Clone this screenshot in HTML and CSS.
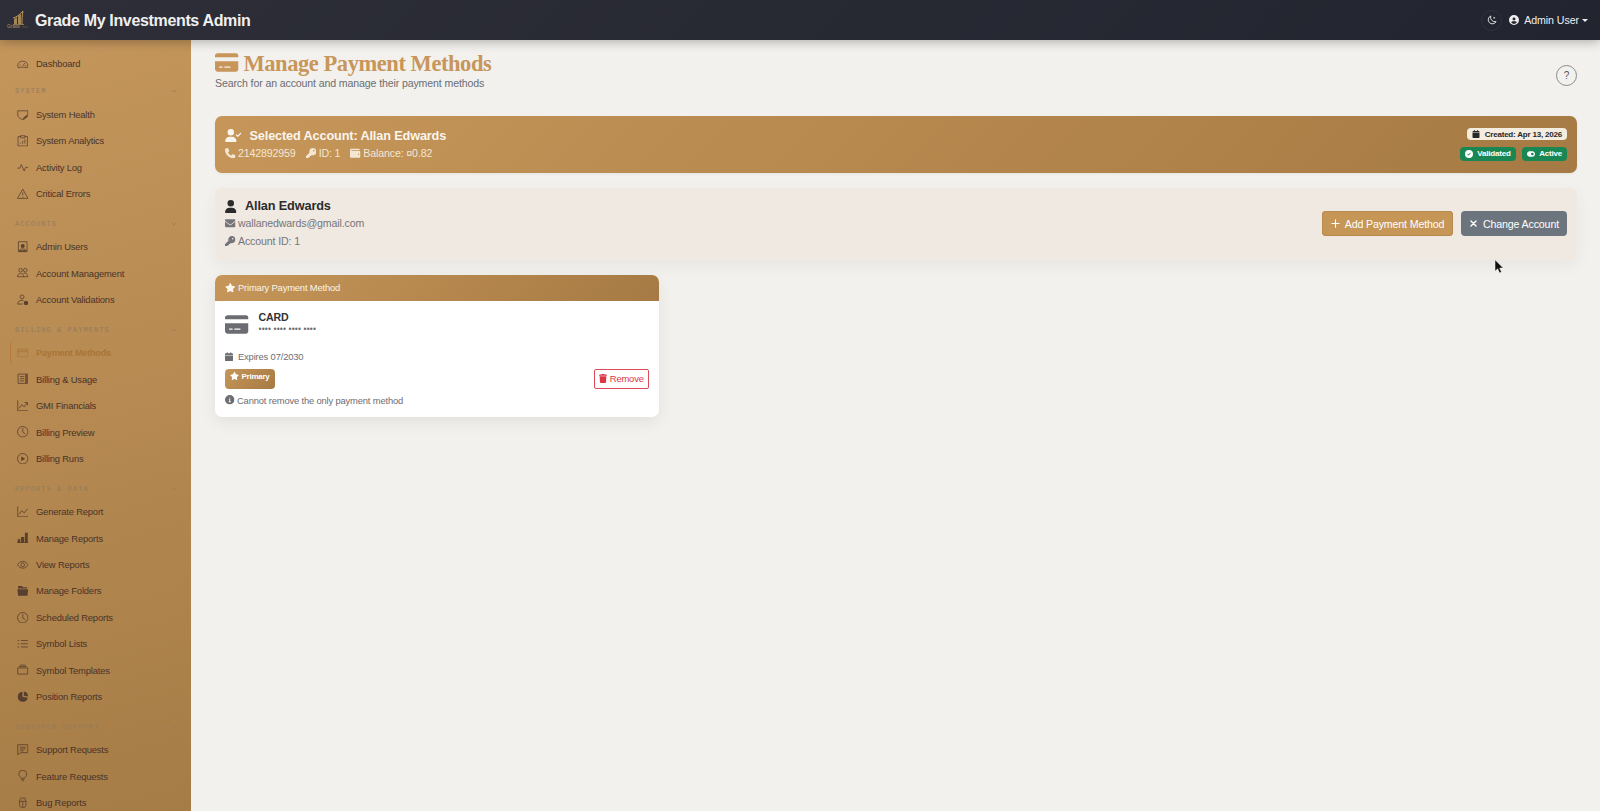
FILE: index.html
```html
<!DOCTYPE html>
<html lang="en">
<head>
  <meta charset="UTF-8">
  <meta name="viewport" content="width=device-width, initial-scale=1.0">
  <title>Manage Payment Methods - Grade My Investments Admin</title>
  <link rel="stylesheet" href="styles.css">
</head>
<body>
  <svg class="sprite" xmlns="http://www.w3.org/2000/svg">
    <!-- solid icons -->
    <symbol id="credit-card" viewBox="0 0 576 512"><path d="M64 32C28.7 32 0 60.7 0 96v32H576V96c0-35.3-28.7-64-64-64H64zM576 224H0V416c0 35.3 28.7 64 64 64H512c35.3 0 64-28.7 64-64V224zM112 352h64c8.8 0 16 7.2 16 16s-7.2 16-16 16H112c-8.8 0-16-7.2-16-16s7.2-16 16-16zm112 16c0-8.8 7.2-16 16-16H368c8.8 0 16 7.2 16 16s-7.2 16-16 16H240c-8.8 0-16-7.2-16-16z"/></symbol>
    <symbol id="user" viewBox="0 0 448 512"><path d="M224 256A128 128 0 1 0 224 0a128 128 0 1 0 0 256zm-45.7 48C79.8 304 0 383.8 0 482.3C0 498.7 13.3 512 29.7 512H418.3c16.4 0 29.7-13.3 29.7-29.7C448 383.8 368.2 304 269.7 304H178.3z"/></symbol>
    <symbol id="user-check" viewBox="0 0 640 512"><path d="M224 256A128 128 0 1 0 224 0a128 128 0 1 0 0 256zm-45.7 48C79.8 304 0 383.8 0 482.3C0 498.7 13.3 512 29.7 512H418.3c16.4 0 29.7-13.3 29.7-29.7C448 383.8 368.2 304 269.7 304H178.3z"/><path d="M440 232l56 56 120-120" fill="none" stroke="currentColor" stroke-width="46" stroke-linecap="round" stroke-linejoin="round"/></symbol>
    <symbol id="phone" viewBox="0 0 512 512"><path d="M164.9 24.6c-7.7-18.6-28-28.5-47.4-23.2l-88 24C12.1 30.2 0 46 0 64C0 311.4 200.6 512 448 512c18 0 33.8-12.1 38.6-29.5l24-88c5.3-19.4-4.6-39.7-23.2-47.4l-96-40c-16.3-6.8-35.2-2.1-46.3 11.6L304.7 368C234.3 334.7 177.3 277.7 144 207.3L193.3 167c13.7-11.2 18.4-30 11.6-46.3l-40-96z"/></symbol>
    <symbol id="key" viewBox="0 0 512 512"><path d="M336 352c97.2 0 176-78.8 176-176S433.2 0 336 0S160 78.8 160 176c0 18.7 2.9 36.8 8.3 53.7L7 391c-4.5 4.5-7 10.6-7 17v80c0 13.3 10.7 24 24 24h80c13.3 0 24-10.7 24-24V448h40c13.3 0 24-10.7 24-24V384h40c6.4 0 12.5-2.5 17-7l33.3-33.3c16.9 5.4 35 8.3 53.7 8.3zM376 96a40 40 0 1 1 0 80 40 40 0 1 1 0-80z"/></symbol>
    <symbol id="wallet" viewBox="0 0 512 512"><path fill-rule="evenodd" d="M64 32C28.7 32 0 60.7 0 96V416c0 35.3 28.7 64 64 64H448c35.3 0 64-28.7 64-64V192c0-35.3-28.7-64-64-64H80c-8.8 0-16-7.2-16-16s7.2-16 16-16H448c17.7 0 32-14.3 32-32s-14.3-32-32-32H64zM416 272a32 32 0 1 1 0 64 32 32 0 1 1 0-64z"/></symbol>
    <symbol id="envelope" viewBox="0 0 512 512"><path d="M48 64C21.5 64 0 85.5 0 112c0 15.1 7.1 29.3 19.2 38.4L236.8 313.6c11.4 8.5 27 8.5 38.4 0L492.8 150.4c12.1-9.1 19.2-23.3 19.2-38.4c0-26.5-21.5-48-48-48H48zM0 176V384c0 35.3 28.7 64 64 64H448c35.3 0 64-28.7 64-64V176L294.4 339.2c-22.8 17.1-54 17.1-76.8 0L0 176z"/></symbol>
    <symbol id="star" viewBox="0 0 576 512"><path d="M316.9 18C311.6 7 300.4 0 288.1 0s-23.4 7-28.8 18L195 150.3 51.4 171.5c-12 1.8-22 10.2-25.7 21.7s-.7 24.2 7.9 32.7L137.8 329 113.2 474.7c-2 12 3 24.2 12.9 31.3s23 8 33.8 2.3l128.3-68.5 128.3 68.5c10.8 5.7 23.9 4.9 33.8-2.3s14.9-19.3 12.9-31.3L438.5 329 542.7 225.9c8.6-8.5 11.7-21.2 7.9-32.7s-13.7-19.9-25.7-21.7L381.2 150.3 316.9 18z"/></symbol>
    <symbol id="calendar" viewBox="0 0 448 512"><path d="M96 32V64H48C21.5 64 0 85.5 0 112v48H448V112c0-26.5-21.5-48-48-48H352V32a32 32 0 0 0-64 0V64H160V32a32 32 0 0 0-64 0zM448 192H0V464c0 26.5 21.5 48 48 48H400c26.5 0 48-21.5 48-48V192z"/></symbol>
    <symbol id="check-circle" viewBox="0 0 512 512"><path fill-rule="evenodd" d="M256 512A256 256 0 1 0 256 0a256 256 0 1 0 0 512zM369 209L241 337c-9.4 9.4-24.6 9.4-33.9 0l-64-64 34-34 47 47 111-111z"/></symbol>
    <symbol id="toggle-on" viewBox="0 0 576 512"><path fill-rule="evenodd" d="M192 64C86 64 0 150 0 256S86 448 192 448H384c106 0 192-86 192-192S490 64 384 64H192zM384 160a96 96 0 1 1 0 192 96 96 0 1 1 0-192z"/></symbol>
    <symbol id="info" viewBox="0 0 512 512"><path fill-rule="evenodd" d="M256 512A256 256 0 1 0 256 0a256 256 0 1 0 0 512zM208 224h72v112h32v48H200v-48h32v-64h-24zM256 128a32 32 0 1 1 0 64 32 32 0 1 1 0-64z"/></symbol>
    <symbol id="trash" viewBox="0 0 448 512"><path d="M135 18L128 32H32a32 32 0 0 0 0 64H416a32 32 0 0 0 0-64H320L313 18C308 7 297 0 284 0H164c-12 0-23 7-29 18zM416 128H32L53 467c2 25 23 45 48 45H347c25 0 46-20 48-45z"/></symbol>
    <symbol id="user-circle" viewBox="0 0 512 512"><path fill-rule="evenodd" d="M256 0a256 256 0 1 0 0 512 256 256 0 1 0 0-512zM256 128a76 76 0 1 1 0 152 76 76 0 1 1 0-152zM112 390c20-46 52-70 100-70h88c48 0 80 24 100 70-80 90-208 90-288 0z"/></symbol>
    <symbol id="plus" viewBox="0 0 16 16"><path d="M8 1.5v13M1.5 8h13" stroke="currentColor" stroke-width="2" stroke-linecap="round"/></symbol>
    <symbol id="times" viewBox="0 0 16 16"><path d="M3.500 3.500l9 9M12.500 3.500l-9 9" stroke="currentColor" stroke-width="2.4" stroke-linecap="round"/></symbol>
    <!-- outline icons for the sidebar -->
    <symbol id="moon" viewBox="0 0 16 16"><path class="line moon" d="M6 1.5a6.6 6.6 0 1 0 8.5 9A7 7 0 0 1 6 1.5z"/><path class="line" d="M11.500 3v3M10 4.500h3"/></symbol>
    <symbol id="chevron" viewBox="0 0 16 16"><path class="line heavy" d="M2 5l6 6 6-6"/></symbol>
    <symbol id="gauge" viewBox="0 0 16 16"><path class="line" d="M1.500 13.500C0 9 2 4.500 8 4.500s8 4.500 6.500 9c-4-1-9-1-13 0zM8 11l3-4M3.500 10H5M11.500 10.500H13"/></symbol>
    <symbol id="shield" viewBox="0 0 16 16"><path class="line" d="M1 2.5h14v6C15 11 11 14 8 15 5 14 1 11 1 8.5z"/><path d="M8 13l6-5v3l-5 3z"/></symbol>
    <symbol id="clipboard" viewBox="0 0 16 16"><path class="line" d="M5 2H1.5v13.3h13V2H11M5 1h6v3H5zM5 12v-1.5M8 12V8M11 12V6"/></symbol>
    <symbol id="activity" viewBox="0 0 16 16"><path class="line" d="M.5 8.5H4l2-5 4 9 2-5h3.5"/></symbol>
    <symbol id="warning" viewBox="0 0 16 16"><path class="line" d="M8 1.5L15.3 14.5H.7zM8 6v4.5M8 12v1.5"/></symbol>
    <symbol id="badge" viewBox="0 0 16 16"><path class="line" d="M2 1h12v14H2zM3 14c1-4 9-4 10 0"/><circle cx="8" cy="7" r="2.8"/><path d="M3 13h10v2H3z"/></symbol>
    <symbol id="people" viewBox="0 0 16 16"><circle class="line" cx="5" cy="4.5" r="2.5"/><circle class="line" cx="11.5" cy="4.5" r="2.5"/><path class="line" d="M.7 13.5c0-6 8.6-6 8.6 0zM9 9c3-1.5 6 .5 6.3 4.5H9.3"/></symbol>
    <symbol id="person-gear" viewBox="0 0 16 16"><circle class="line" cx="7" cy="4" r="2.7"/><path class="line" d="M9 9C4 8 1 10.5 1 14h7"/><circle cx="12.5" cy="12.5" r="3.1"/></symbol>
    <symbol id="card" viewBox="0 0 16 16"><path class="line" d="M1 3h14v10.5H1zM1 5.5h14M1 6.5h14M3 10h2"/></symbol>
    <symbol id="receipt" viewBox="0 0 16 16"><path class="line" stroke-width="1.6" d="M1.5 1.5h13v13h-13z"/><path class="line" d="M4 5h6M4 8h6M4 11h6M12 2v12M13 2v12"/></symbol>
    <symbol id="graph-up" viewBox="0 0 16 16"><path class="line" d="M1 .5V15h14.5M3 11.5l3.5-5 3.5 3L14 4M10.5 3.5h4v4"/></symbol>
    <symbol id="graph" viewBox="0 0 16 16"><path class="line" d="M1 .5V15h14.5M3 11.5l3.5-5 3.5 3L14.5 4"/></symbol>
    <symbol id="clock" viewBox="0 0 16 16"><circle class="line" cx="8" cy="8" r="7.3"/><path class="line" d="M8 3v5.5l3.5 2.5"/></symbol>
    <symbol id="play" viewBox="0 0 16 16"><circle class="line" cx="8" cy="8" r="7.3"/><path d="M6 4.8v6.4L11.3 8z"/></symbol>
    <symbol id="bars" viewBox="0 0 16 16"><path d="M1 10h3.5v5H1zM5.5 7H10v8H5.5zM11 1h4v14h-4zM0 14.3h16v1H0z"/></symbol>
    <symbol id="eye" viewBox="0 0 16 16"><path class="line" d="M.7 8C4 1.7 12 1.7 15.3 8 12 14.3 4 14.3.7 8z"/><circle class="line" cx="8" cy="8" r="2.6"/></symbol>
    <symbol id="folder" viewBox="0 0 16 16"><path d="M1.5 1.5H7l1.5 1.5H14v2H1.500zM.5 5.8h15L14.5 15h-13z"/></symbol>
    <symbol id="list" viewBox="0 0 16 16"><path class="line" d="M5.5 3.5H15M5.5 8H15M5.5 12.5H15M1 3.5h2M1 8h2M1 12.5h2"/></symbol>
    <symbol id="collection" viewBox="0 0 16 16"><path class="line" d="M1 5.5h14V14H1zM2.5 3.5h11M4 1.5h8"/></symbol>
    <symbol id="pie" viewBox="0 0 16 16"><path d="M7.500 1v7l7.500 1.500A7 7 0 1 1 7.500 1zM9.500 .8A7 7 0 0 1 15.500 7.500L9.500 6.500z"/></symbol>
    <symbol id="chat" viewBox="0 0 16 16"><path class="line" d="M1 1h14v11H5l-4 3zM4 4.5h8M4 7h8M4 9.5h5"/></symbol>
    <symbol id="bulb" viewBox="0 0 16 16"><path class="line" d="M5.5 11.5C5 9.5 2.5 8.5 2.5 5.800a5.500 5.500 0 0 1 11 0c0 2.700-2.500 3.700-3 5.700zM6 13.500h4M6.500 15.300h3"/></symbol>
    <symbol id="bug" viewBox="0 0 16 16"><path class="line" d="M3.5 6c0-6 9-6 9 0v4c0 7-9 7-9 0zM3.5 6h9M8 6v9M5 1L4 0M11 1l1-1"/></symbol>
  </svg>

  <header class="topbar">
    <a class="brand" href="#">
      <svg class="logo" viewBox="0 0 22 20">
        <path d="M7 9l3-2v7H7zM11 6l3-2v10h-3z" fill="#a08657"/>
        <path d="M6 8c4-1 6-3 10-7-1 4-1 9-1 13" fill="none" stroke="#c19a57"/>
        <path d="M6 14.5h11" stroke="#8c7552"/>
        <text x="0" y="18" font-size="5">Grade</text>
        <path d="M15 17h6" stroke="#6d604f" stroke-width=".7"/>
      </svg>
      <span>Grade My Investments Admin</span>
    </a>
    <div class="topbar-right">
      <button class="theme-btn"><svg class="icon"><use href="#moon"/></svg></button>
      <a class="user-menu" href="#"><svg class="icon"><use href="#user-circle"/></svg><span>Admin User</span><i class="caret"></i></a>
    </div>
  </header>

  <div class="layout">
    <nav class="sidebar">
      <a class="nav-link" href="#"><svg><use href="#gauge"/></svg>Dashboard</a>

      <h6 class="nav-heading first">System<svg><use href="#chevron"/></svg></h6>
      <a class="nav-link" href="#"><svg><use href="#shield"/></svg>System Health</a>
      <a class="nav-link" href="#"><svg><use href="#clipboard"/></svg>System Analytics</a>
      <a class="nav-link" href="#"><svg><use href="#activity"/></svg>Activity Log</a>
      <a class="nav-link" href="#"><svg><use href="#warning"/></svg>Critical Errors</a>

      <h6 class="nav-heading">Accounts<svg><use href="#chevron"/></svg></h6>
      <a class="nav-link" href="#"><svg><use href="#badge"/></svg>Admin Users</a>
      <a class="nav-link" href="#"><svg><use href="#people"/></svg>Account Management</a>
      <a class="nav-link" href="#"><svg><use href="#person-gear"/></svg>Account Validations</a>

      <h6 class="nav-heading">Billing &amp; Payments<svg><use href="#chevron"/></svg></h6>
      <a class="nav-link active" href="#"><svg><use href="#card"/></svg>Payment Methods</a>
      <a class="nav-link" href="#"><svg><use href="#receipt"/></svg>Billing &amp; Usage</a>
      <a class="nav-link" href="#"><svg><use href="#graph-up"/></svg>GMI Financials</a>
      <a class="nav-link" href="#"><svg><use href="#clock"/></svg>Billing Preview</a>
      <a class="nav-link" href="#"><svg><use href="#play"/></svg>Billing Runs</a>

      <h6 class="nav-heading">Reports &amp; Data<svg><use href="#chevron"/></svg></h6>
      <a class="nav-link" href="#"><svg><use href="#graph"/></svg>Generate Report</a>
      <a class="nav-link" href="#"><svg><use href="#bars"/></svg>Manage Reports</a>
      <a class="nav-link" href="#"><svg><use href="#eye"/></svg>View Reports</a>
      <a class="nav-link" href="#"><svg><use href="#folder"/></svg>Manage Folders</a>
      <a class="nav-link" href="#"><svg><use href="#clock"/></svg>Scheduled Reports</a>
      <a class="nav-link" href="#"><svg><use href="#list"/></svg>Symbol Lists</a>
      <a class="nav-link" href="#"><svg><use href="#collection"/></svg>Symbol Templates</a>
      <a class="nav-link" href="#"><svg><use href="#pie"/></svg>Position Reports</a>

      <h6 class="nav-heading">Customer Support<svg><use href="#chevron"/></svg></h6>
      <a class="nav-link" href="#"><svg><use href="#chat"/></svg>Support Requests</a>
      <a class="nav-link" href="#"><svg><use href="#bulb"/></svg>Feature Requests</a>
      <a class="nav-link" href="#"><svg><use href="#bug"/></svg>Bug Reports</a>
    </nav>

    <main class="content">
      <div class="page-header">
        <div>
          <h1><svg><use href="#credit-card"/></svg><span>Manage Payment Methods</span></h1>
          <p>Search for an account and manage their payment methods</p>
        </div>
        <button class="help-btn">?</button>
      </div>

      <section class="banner">
        <div>
          <h5><svg><use href="#user-check"/></svg><span>Selected Account: Allan Edwards</span></h5>
          <div class="meta">
            <span><svg><use href="#phone"/></svg>2142892959</span>
            <span><svg><use href="#key"/></svg>ID: 1</span>
            <span><svg><use href="#wallet"/></svg>Balance: ¤0.82</span>
          </div>
        </div>
        <div class="badges">
          <span class="badge light"><svg><use href="#calendar"/></svg>Created: Apr 13, 2026</span>
          <div class="badge-row">
            <span class="badge green"><svg><use href="#check-circle"/></svg>Validated</span>
            <span class="badge green"><svg><use href="#toggle-on"/></svg>Active</span>
          </div>
        </div>
      </section>

      <section class="account">
        <div class="account-info">
          <h5><svg><use href="#user"/></svg><span>Allan Edwards</span></h5>
          <p><svg><use href="#envelope"/></svg><span>wallanedwards@gmail.com</span></p>
          <p><svg><use href="#key"/></svg><span>Account ID: 1</span></p>
        </div>
        <div class="actions">
          <button class="btn btn-gold"><svg><use href="#plus"/></svg><span>Add Payment Method</span></button>
          <button class="btn btn-grey"><svg><use href="#times"/></svg><span>Change Account</span></button>
        </div>
      </section>

      <section class="pay-card">
        <div class="pay-card-header"><svg><use href="#star"/></svg>Primary Payment Method</div>
        <div class="pay-card-body">
          <div class="card-type">
            <svg><use href="#credit-card"/></svg>
            <div>
              <h6>CARD</h6>
              <span class="dots">•••• •••• •••• ••••</span>
            </div>
          </div>
          <div class="expires"><svg><use href="#calendar"/></svg>Expires 07/2030</div>
          <div class="card-row">
            <span class="primary-badge"><svg><use href="#star"/></svg>Primary</span>
            <button class="btn-remove"><svg><use href="#trash"/></svg>Remove</button>
          </div>
          <div class="note"><svg><use href="#info"/></svg>Cannot remove the only payment method</div>
        </div>
      </section>
    </main>
  </div>

  <svg class="cursor" viewBox="0 0 10 15"><path d="M1 .8v11.4l2.700-2.400 1.800 4.200 2-.9-1.800-4h3.600z" fill="#111" stroke="#fff" stroke-width=".5"/></svg>
</body>
</html>
```
FILE: styles.css
```css
* {
  margin: 0;
  padding: 0;
  box-sizing: border-box;
}
body {
  height: 811px;
  overflow: hidden;
  font-family: "Liberation Sans", Arial, sans-serif;
  font-size: 10.6px;
  letter-spacing: -0.13px;
  background: #f2f1ed;
  color: #2b2b2b;
}
svg {
  flex: none;
  fill: currentColor;
}
a {
  color: inherit;
  text-decoration: none;
}
button {
  font-family: inherit;
  letter-spacing: inherit;
}
.sprite {
  display: none;
}
.line {
  fill: none;
  stroke: currentColor;
  stroke-width: 1.1;
}
.heavy {
  stroke-width: 2;
}
.moon {
  stroke-width: 1.5;
}

/* top bar */
.topbar {
  position: relative;
  z-index: 2;
  display: flex;
  align-items: center;
  justify-content: space-between;
  height: 40px;
  padding: 0 12px 0 7px;
  background: linear-gradient(135deg, #2d2e38, #22242f);
  box-shadow: 0 2px 10px rgba(0,0,0,0.28);
  color: #f0eff0;
}
.brand {
  display: flex;
  align-items: center;
  gap: 6px;
  font-size: 16px;
  font-weight: bold;
  letter-spacing: -0.34px;
}
.brand span {
  padding-top: 1px;
}
.logo {
  width: 22px;
  height: 20px;
}
.logo text {
  fill: #8a7655;
}
.topbar-right {
  display: flex;
  align-items: center;
  gap: 7px;
}
.theme-btn {
  display: flex;
  align-items: center;
  justify-content: center;
  width: 21px;
  height: 21px;
  border: 1px solid #31323b;
  border-radius: 50%;
  background: transparent;
  color: #e4e4e8;
}
.icon {
  width: 10px;
  height: 10px;
}
.user-menu {
  display: flex;
  align-items: center;
  gap: 5px;
  letter-spacing: -0.05px;
}
.caret {
  margin-left: -2px;
  border: 3px solid transparent;
  border-top-color: currentColor;
  border-bottom: 0;
}

/* sidebar */
.layout {
  display: flex;
  height: 771px;
}
.sidebar {
  flex: none;
  width: 191px;
  padding: 11.2px 10px 0;
  overflow: hidden;
  background: linear-gradient(165deg, #c4965c, #a67c46);
}
.nav-link {
  display: flex;
  align-items: center;
  gap: 7.5px;
  height: 24.45px;
  margin-bottom: 2px;
  padding-left: 7px;
  font-size: 9.4px;
  letter-spacing: -0.17px;
  color: #49332a;
}
.nav-link svg {
  width: 11.5px;
  height: 11.5px;
  opacity: 0.85;
}
.nav-link.active {
  border-left: 1px solid #b67a39;
  border-radius: 4px;
  padding-left: 6px;
  color: #a97538;
  font-weight: bold;
  letter-spacing: -0.35px;
}
.nav-heading {
  display: flex;
  align-items: center;
  justify-content: space-between;
  height: 12px;
  margin: 11.85px 4px 4.8px 5px;
  font-family: "Liberation Mono", monospace;
  font-size: 7px;
  font-weight: normal;
  letter-spacing: 1.06px;
  text-transform: uppercase;
  color: #937b5c;
}
.nav-heading.first {
  margin-top: 9.75px;
}
.nav-heading svg {
  width: 6px;
  height: 6px;
}

/* content */
.content {
  flex: 1;
  padding: 12px 23px 0 24px;
}
.page-header {
  display: flex;
  justify-content: space-between;
  height: 64px;
}
.page-header h1 {
  display: flex;
  align-items: center;
  gap: 5px;
  height: 24px;
  font-family: "Liberation Serif", serif;
  font-size: 22.5px;
  letter-spacing: -0.44px;
  color: #c8955a;
}
.page-header h1 svg {
  width: 23.5px;
  height: 21px;
  margin-bottom: 3px;
}
.page-header p {
  line-height: 14px;
  color: #6c6d72;
}
.help-btn {
  width: 21px;
  height: 21px;
  margin-top: 13px;
  border: 1px solid #8a8b8e;
  border-radius: 50%;
  background: transparent;
  font-size: 10px;
  color: #55565a;
}
h5 {
  display: flex;
  align-items: center;
  font-size: 12.7px;
}

.banner {
  display: flex;
  justify-content: space-between;
  height: 56.5px;
  padding: 12px 10px;
  border-radius: 7px;
  background: linear-gradient(135deg, #c69659, #a67a44);
  box-shadow: 0 1px 3px rgba(0,0,0,0.06);
  color: #faf5ec;
}
.banner h5 {
  gap: 8px;
  height: 15px;
}
.banner h5 svg {
  width: 16.5px;
  height: 13px;
}
.meta {
  display: flex;
  gap: 10px;
  margin-top: 4px;
  color: #f3e7d4;
}
.meta span {
  display: flex;
  align-items: center;
  gap: 2.5px;
}
.meta svg {
  width: 10.5px;
  height: 10.5px;
}
.badges {
  display: flex;
  flex-direction: column;
  align-items: flex-end;
  gap: 7px;
}
.badge-row {
  display: flex;
  gap: 6px;
}
.badge {
  display: flex;
  align-items: center;
  gap: 4.5px;
  height: 13.5px;
  padding: 0 5px;
  border-radius: 4px;
  font-size: 8px;
  font-weight: bold;
  letter-spacing: -0.2px;
}
.badge svg {
  width: 8px;
  height: 8px;
}
.badge.light {
  background: #f4ecdf;
  color: #26282b;
}
.badge.green {
  background: #198754;
  color: #fff;
}

.account {
  display: flex;
  align-items: center;
  justify-content: space-between;
  height: 71.5px;
  margin-top: 15.5px;
  padding: 0 10px;
  border-radius: 7px;
  background: #efe9e2;
  box-shadow: 0 5px 16px rgba(0,0,0,0.05);
}
.account-info {
  align-self: flex-start;
  padding-top: 10px;
}
.account-info h5 {
  gap: 8.5px;
  height: 16px;
}
.account-info h5 svg {
  width: 11.5px;
  height: 13px;
}
.account-info p {
  display: flex;
  align-items: center;
  gap: 2.5px;
  height: 18px;
  color: #77757a;
}
.account-info p svg {
  width: 10.5px;
  height: 10.5px;
}
.actions {
  display: flex;
  gap: 8px;
}
.btn {
  display: flex;
  align-items: center;
  justify-content: center;
  gap: 5px;
  height: 25px;
  border: none;
  border-radius: 4px;
  font-size: 10.6px;
  color: #fff;
}
.btn svg {
  width: 9px;
  height: 9px;
}
.btn-gold {
  width: 131px;
  background: #c69657;
  box-shadow: inset 0 0 0 1px #b98a4e;
}
.btn-grey {
  width: 106px;
  background: #6c757d;
}

.pay-card {
  width: 444px;
  height: 142px;
  margin-top: 15.5px;
  border-radius: 7px;
  background: #fff;
  box-shadow: 0 5px 16px rgba(0,0,0,0.07);
  overflow: hidden;
}
.pay-card-header {
  display: flex;
  align-items: center;
  gap: 2.5px;
  height: 25.5px;
  padding: 0 10px;
  background: linear-gradient(135deg, #c69659, #a67a44);
  font-size: 9.4px;
  letter-spacing: -0.17px;
  color: #fbf4e8;
}
.pay-card-header svg {
  width: 10.5px;
  height: 9.5px;
}
.pay-card-body {
  padding: 10px;
  font-size: 9.4px;
  letter-spacing: -0.16px;
  color: #6c6d72;
}
.card-type {
  display: flex;
  gap: 10px;
  height: 38px;
}
.card-type > svg {
  width: 23.5px;
  height: 21px;
  margin-top: 3px;
}
.card-type h6 {
  height: 13px;
  font-size: 10.6px;
  line-height: 13px;
  color: #333;
}
.dots {
  display: block;
  font-size: 8.5px;
  line-height: 10px;
  letter-spacing: 0.15px;
}
.expires {
  display: flex;
  align-items: center;
  gap: 5px;
  height: 16px;
}
.expires svg {
  width: 8px;
  height: 9.5px;
}
.card-row {
  display: flex;
  justify-content: space-between;
  margin-top: 4px;
}
.primary-badge {
  display: flex;
  gap: 2.5px;
  width: 50px;
  height: 20px;
  padding: 3px 5px;
  border-radius: 4px;
  background: linear-gradient(135deg, #c69659, #a67a44);
  font-size: 8px;
  font-weight: bold;
  letter-spacing: -0.25px;
  color: #fff;
}
.primary-badge svg {
  width: 9px;
  height: 8px;
}
.btn-remove {
  display: flex;
  align-items: center;
  justify-content: center;
  gap: 2.5px;
  width: 55px;
  height: 20px;
  border: 1px solid #dc4a5a;
  border-radius: 2px;
  background: #fff;
  font-size: 9.4px;
  color: #dc3545;
}
.btn-remove svg {
  width: 8px;
  height: 9px;
}
.note {
  display: flex;
  align-items: center;
  gap: 2.5px;
  height: 23px;
}
.note svg {
  width: 9.5px;
  height: 9.5px;
}

.cursor {
  position: absolute;
  left: 1494px;
  top: 259px;
  width: 10px;
  height: 15px;
}
```
